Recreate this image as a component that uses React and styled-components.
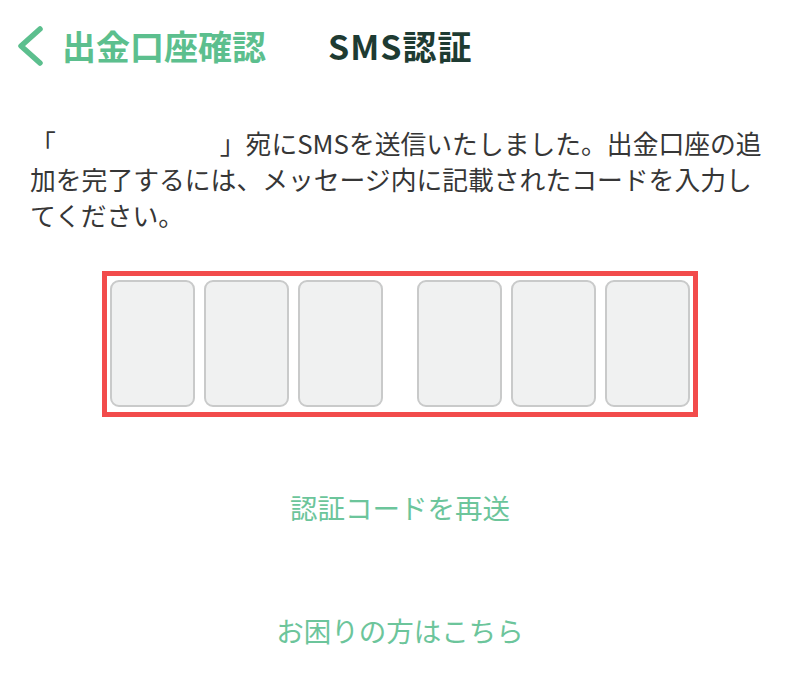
import React from 'react';
import styled, { createGlobalStyle } from 'styled-components';

const GlobalStyle = createGlobalStyle`
  html, body {
    margin: 0;
    padding: 0;
    background: #ffffff;
  }
  body {
    font-family: "Noto Sans CJK JP", "Noto Sans", sans-serif;
  }
`;

const CODE_LENGTH = 6;

const SmsVerify = () => {
  const cells = Array.from({ length: CODE_LENGTH }, (_, i) => i);

  return (
    <Page>
      <GlobalStyle />
      <Header>
        <BackButton>
          <svg width="28" height="42" viewBox="0 0 28 42" fill="none">
            <path
              d="M24 4 L5 21 L24 38"
              stroke="#5cbf8e"
              strokeWidth="5.5"
              strokeLinecap="round"
              strokeLinejoin="round"
            />
          </svg>
          <BackLabel>出金口座確認</BackLabel>
        </BackButton>
        <Title>SMS認証</Title>
      </Header>

      <Message>
        「<Blank />」宛にSMSを送信いたしました。出金口座の追加を完了するには、メッセージ内に記載されたコードを入力してください。
      </Message>

      <CodeWrap>
        <CodeBox>
          <CodeGroup>
            {cells.slice(0, 3).map((i) => (
              <CodeCell key={i} />
            ))}
          </CodeGroup>
          <CodeGroup>
            {cells.slice(3).map((i) => (
              <CodeCell key={i} />
            ))}
          </CodeGroup>
        </CodeBox>
      </CodeWrap>

      <LinkText $top={72}>認証コードを再送</LinkText>
      <LinkText $top={87}>お困りの方はこちら</LinkText>
    </Page>
  );
};

export default SmsVerify;

const Page = styled.div`
  width: 800px;
  min-height: 692px;
  display: flex;
  flex-direction: column;
`;

const Header = styled.div`
  height: 92px;
  display: flex;
  align-items: center;
  padding-left: 16px;
`;

const BackButton = styled.div`
  display: flex;
  align-items: center;
  gap: 18px;
`;

const BackLabel = styled.span`
  font-size: 34px;
  font-weight: 700;
  color: #5cbf8e;
  line-height: 1;
`;

const Title = styled.span`
  margin-left: 62px;
  font-size: 34px;
  font-weight: 700;
  letter-spacing: 1px;
  color: #1e3b32;
  line-height: 1;
`;

const Message = styled.p`
  margin: 33px 0 0 30px;
  width: 740px;
  font-size: 25.8px;
  line-height: 36px;
  color: #363636;
`;

const Blank = styled.span`
  display: inline-block;
  width: 164px;
`;

const CodeWrap = styled.div`
  margin-top: 38px;
  display: flex;
  justify-content: center;
`;

const CodeBox = styled.div`
  display: flex;
  gap: 34px;
  padding: 4px 3px 5px;
  border: 5px solid #f24b4b;
`;

const CodeGroup = styled.div`
  display: flex;
  gap: 9px;
`;

const CodeCell = styled.div`
  width: 85px;
  height: 127px;
  box-sizing: border-box;
  border: 2px solid #c9caca;
  border-radius: 9px;
  background: #f0f1f1;
`;

const LinkText = styled.div`
  margin-top: ${(p) => p.$top}px;
  text-align: center;
  font-size: 27.5px;
  line-height: 36px;
  color: #6cc59b;
`;
